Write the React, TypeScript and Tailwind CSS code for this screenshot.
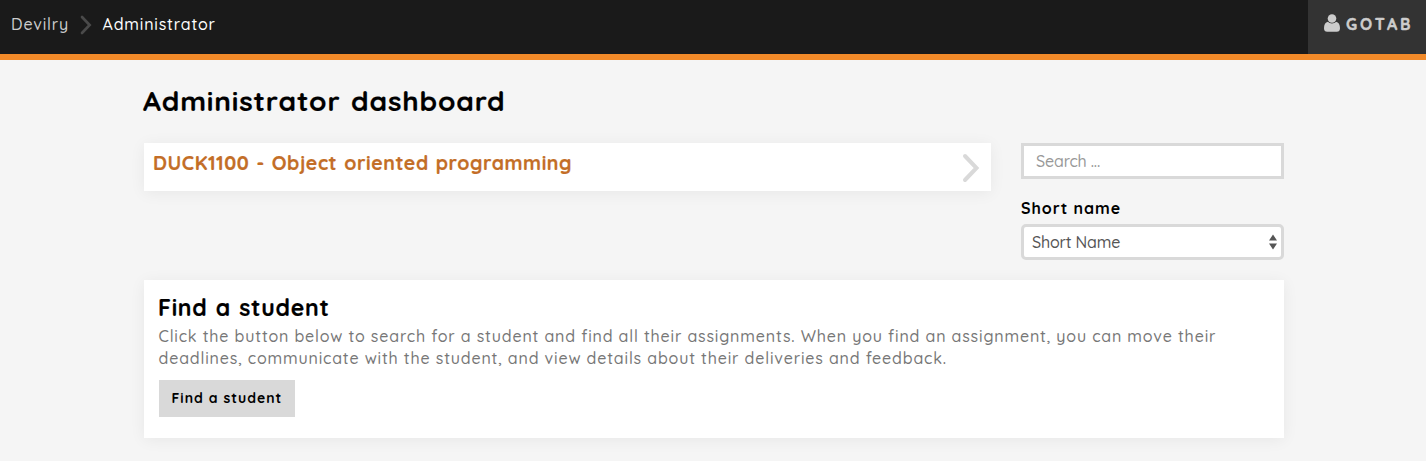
function Chevron({ className }: { className: string }) {
  return (
    <svg viewBox="0 0 18 30" className={className} fill="none" stroke="currentColor" strokeWidth="4" strokeLinecap="round" strokeLinejoin="miter" aria-hidden="true">
      <path d="M3 3 L14.5 15 L3 27" />
    </svg>
  );
}

function Header() {
  return (
    <header className="flex h-[60px] items-stretch justify-between border-b-[6px] border-[#f28a29] bg-[#1a1a1a]">
      <nav className="flex items-start pl-[11px] pt-[13px] text-base font-medium leading-[22px]">
        <a className="w-[58px] whitespace-nowrap tracking-[0.8px] text-[#cccccc]">Devilry</a>
        <Chevron className="ml-[11px] mt-[2px] h-5 w-3 text-[#4a4a4a]" />
        <a className="ml-[10.5px] whitespace-nowrap tracking-[0.83px] text-white">Administrator</a>
      </nav>
      <button className="flex w-[118px] items-start bg-[#333333] pl-4 pt-[13px] text-base font-bold leading-[22px] tracking-[2.9px] text-[#cccccc] [-webkit-text-stroke:0.4px_#cccccc]">
        <svg viewBox="0 0 16 18" className="mt-px h-[18px] w-4 shrink-0" fill="currentColor" aria-hidden="true">
          <circle cx="8" cy="4.5" r="4.3" />
          <path d="M4 7.8C1.3 8.2 0 10.8 0 14.2C0 16.5 1.2 17.8 3.2 17.8H12.8C14.8 17.8 16 16.5 16 14.2C16 10.8 14.7 8.2 12 7.8C11 8.9 9.6 9.5 8 9.5S5 8.9 4 7.8Z" />
        </svg>
        <span className="ml-[6px]">GOTAB</span>
      </button>
    </header>
  );
}

export default function App() {
  return (
    <div className="min-h-[461px] bg-[#f5f5f5] font-['Quicksand','Lato',sans-serif]">
      <Header />
      <main className="mx-auto w-[1140px] translate-x-px pt-[24px]">
        <h1 className="-ml-px whitespace-nowrap text-[28px] font-bold leading-[34px] tracking-[0.84px] text-black [-webkit-text-stroke:0.2px_black] [word-spacing:2px]">Administrator dashboard</h1>
        <div className="mt-[25px] flex h-[117px] items-start justify-between">
          <a className="flex h-12 w-[847px] items-start justify-between bg-white pl-[10px] pr-[11px] shadow-[0_2px_15px_rgba(0,0,0,0.06)]">
            <h2 className="-ml-px whitespace-nowrap pt-[7px] text-[19.5px] font-bold leading-[26px] tracking-[0.57px] text-[#c36e27] [-webkit-text-stroke:0.2px_#c36e27] [word-spacing:1px]">DUCK1100 - Object oriented programming</h2>
            <Chevron className="mt-[10px] h-[30px] w-[18px] text-[#d9d9d9]" />
          </a>
          <aside className="w-[263px]">
            <input placeholder="Search ..." className="block h-9 w-full border-[3px] border-[#d9d9d9] bg-white px-3 text-base font-medium tracking-[-0.2px] text-[#555] outline-none placeholder:text-[#999]" />
            <div className="mt-[18px] text-base font-bold leading-[22px] tracking-[0.95px] text-black">Short name</div>
            <button className="mt-[5px] flex h-9 w-full items-center justify-between rounded-[5px] border-[3px] border-[#d9d9d9] bg-white pl-2 pr-1 text-base font-medium tracking-[-0.2px] text-[#555]">
              <span>Short Name</span>
              <svg viewBox="0 0 8 16" className="h-4 w-2" fill="#555555" aria-hidden="true">
                <path d="M0 6.5 L4 0.5 L8 6.5Z M0 9.5 L4 15.5 L8 9.5Z" />
              </svg>
            </button>
          </aside>
        </div>
        <section className="mt-5 h-[158px] bg-white px-[15px] pt-[14px] shadow-[0_2px_15px_rgba(0,0,0,0.06)]">
          <h2 className="-ml-px text-[23px] font-bold leading-[28px] tracking-[0.76px] text-black [-webkit-text-stroke:0.2px_black] [word-spacing:1px]">Find a student</h2>
          <p className="-ml-[0.5px] mt-[3px] whitespace-nowrap text-base font-medium leading-[22px] text-[#777]">
            <span className="block tracking-[0.83px]">Click the button below to search for a student and find all their assignments. When you find an assignment, you can move their</span>
            <span className="block tracking-[0.83px]">deadlines, communicate with the student, and view details about their deliveries and feedback.</span>
          </p>
          <button className="mt-[11px] flex h-[37px] w-[136px] items-center whitespace-nowrap bg-[#d9d9d9] pb-0.5 pl-[12.5px] text-sm font-bold tracking-[1px] text-black">Find a student</button>
        </section>
      </main>
    </div>
  );
}
